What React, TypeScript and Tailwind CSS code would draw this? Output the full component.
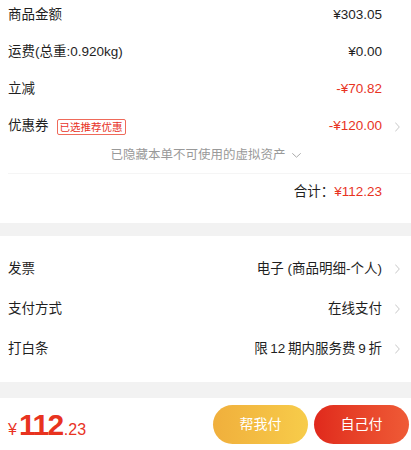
const RED = "text-[#e8331f]";

function Chevron() {
  return (
    <svg width="5" height="10" viewBox="0 0 5 10" fill="none" className="block">
      <path d="M0.5 0.8 L4.3 5 L0.5 9.2" stroke="#c8c8c8" strokeWidth="1" strokeLinecap="round" strokeLinejoin="round" />
    </svg>
  );
}

function Row({
  label,
  value,
  valueClass = "text-[#1f1f1f]",
  arrow = false,
  tag,
  h = "h-[37px]",
}: {
  label: string;
  value: string;
  valueClass?: string;
  arrow?: boolean;
  tag?: string;
  h?: string;
}) {
  return (
    <div className={`flex items-center justify-between pl-2 pr-[11px] ${h}`}>
      <div className="flex items-center gap-2 text-[13.5px] text-[#1f1f1f]">
        <span>{label}</span>
        {tag && (
          <span className="border border-[#ef6a5a] text-[#e8331f] text-[10.5px] leading-[12px] px-[2px] py-[1px] rounded-[2px]">
            {tag}
          </span>
        )}
      </div>
      <div className="flex items-center">
        <span className={`text-[13.5px] ${valueClass}`}>{value}</span>
        <div className="w-[18px] flex justify-end">{arrow && <Chevron />}</div>
      </div>
    </div>
  );
}

export default function App() {
  return (
    <div className="w-[411px] h-[450px] overflow-hidden bg-white font-['Liberation_Sans','Noto_Sans_CJK_SC',sans-serif]">
      <div className="-mt-[3px]">
        <Row label="商品金额" value="¥303.05" />
        <Row label="运费(总重:0.920kg)" value="¥0.00" />
        <Row label="立减" value="-¥70.82" valueClass={RED} />
        <Row label="优惠券" value="-¥120.00" valueClass={RED} arrow tag="已选推荐优惠" />
        <div className="h-[20px] flex items-center justify-center gap-[6px] text-[12.5px] text-[#999]">
          <span>已隐藏本单不可使用的虚拟资产</span>
          <svg width="9" height="5" viewBox="0 0 9 5" fill="none">
            <path d="M0.6 0.6 L4.5 4.2 L8.4 0.6" stroke="#aaa" strokeWidth="1" strokeLinecap="round" strokeLinejoin="round" />
          </svg>
        </div>
        <div className="mt-[8px] ml-2 border-t border-[#f5f5f5]" />
        <div className="h-[37px] flex items-center justify-end pr-[29px] text-[13.5px]">
          <span className="text-[#1f1f1f]">合计：</span>
          <span className={RED}>¥112.23</span>
        </div>
        <div className="h-[12px]" />
      </div>

      <div className="h-[13px] bg-[#f2f2f2]" />

      <div className="pt-[13px] pb-[13px]">
        <Row label="发票" value="电子 (商品明细-个人)" arrow h="h-[40px]" />
        <Row label="支付方式" value="在线支付" arrow h="h-[40px]" />
        <Row label="打白条" value={"限\u200912\u2009期内服务费\u20099\u2009折"} arrow h="h-[40px]" />
      </div>

      <div className="h-[16px] bg-[#f2f2f2]" />

      <div className="h-[52px] flex items-center justify-between pl-2 pr-[2px]">
        <div className="flex items-baseline text-[#e8331f] pt-[4px]">
          <span className="text-[16px] mr-[2px]">¥</span>
          <span className="text-[30px] leading-none font-bold tracking-[-1.5px] mr-[1px]">112</span>
          <span className="text-[16px]">.23</span>
        </div>
        <div className="flex gap-[6px]">
          <button className="w-[95px] h-[39px] rounded-full bg-gradient-to-r from-[#f0af3c] to-[#f7cc4a] text-white text-[14px]">
            帮我付
          </button>
          <button className="w-[95px] h-[39px] rounded-full bg-gradient-to-r from-[#e0281c] to-[#ef5a36] text-white text-[14px]">
            自己付
          </button>
        </div>
      </div>
    </div>
  );
}
